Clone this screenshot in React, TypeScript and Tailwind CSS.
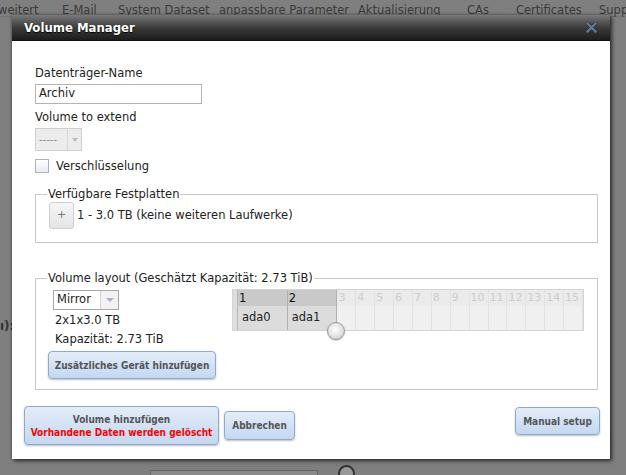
import React from 'react';

const tabs = [
  { label: 'weitert', x: -2 },
  { label: 'E-Mail', x: 62 },
  { label: 'System Dataset', x: 118 },
  { label: 'anpassbare Parameter', x: 219 },
  { label: 'Aktualisierung', x: 358 },
  { label: 'CAs', x: 467 },
  { label: 'Certificates', x: 516 },
  { label: 'Supp', x: 599 },
];

const slots = Array.from({ length: 13 }, (_, i) => i + 3);

const boldFont = "font-['DejaVu_Sans_Condensed','Liberation_Sans',sans-serif] font-bold";

function BlueButton({ children, className = '' }: { children: React.ReactNode; className?: string }) {
  return (
    <button
      className={`whitespace-nowrap rounded-[4px] border border-[#8fa9c9] bg-gradient-to-b from-[#e3edf9] to-[#c3d8f1] text-[10px] text-[#555] shadow-[0_1px_2px_rgba(0,0,0,0.25)] ${boldFont} ${className}`}
    >
      {children}
    </button>
  );
}

function Legend({ children }: { children: React.ReactNode }) {
  return <legend className="px-[1px] text-[11.5px] leading-[14px] text-[#222]">{children}</legend>;
}

export default function App() {
  return (
    <div className="relative h-[475px] w-[626px] overflow-hidden bg-[#7f7f7f] font-['DejaVu_Sans',sans-serif] text-[#222]">
      {/* page behind the overlay */}
      <div className="relative h-[17px] border-b border-[#727272]">
        {tabs.map(t => (
          <span
            key={t.label}
            className="absolute top-[2px] whitespace-nowrap text-[11.5px] leading-[16px] text-[#3a3a3a]"
            style={{ left: t.x }}
          >
            {t.label}
          </span>
        ))}
      </div>
      <div className="absolute left-0 top-[317px] text-[12px] font-bold text-[#333]">ı):</div>
      <div className="absolute left-[150px] top-[470px] h-[10px] w-[168px] border border-[#666] bg-[#8a8a8a]" />
      <div className="absolute left-[338px] top-[465px] h-[17px] w-[17px] rounded-full border-2 border-[#333] bg-[#999]" />

      {/* modal */}
      <div className="absolute left-[12px] top-[15px] flex h-[444px] w-[598px] flex-col shadow-[2px_2px_4px_rgba(0,0,0,0.6),0_0_3px_rgba(0,0,0,0.4)]">
        <div className="flex h-[26px] items-center justify-between border-b border-[#111] bg-gradient-to-b from-[#7a7a7a] via-[#3c3c3c] to-[#1c1c1c] pl-[12px] pr-[13px]">
          <span className={`text-[13px] text-white [text-shadow:0_1px_1px_#000] ${boldFont}`}>Volume Manager</span>
          <svg width="11" height="11" viewBox="0 0 11 11">
            <path d="M1.5 1.5 L9.5 9.5 M9.5 1.5 L1.5 9.5" stroke="#25303a" strokeWidth="3.6" strokeLinecap="square" />
            <path d="M1.5 1.5 L9.5 9.5 M9.5 1.5 L1.5 9.5" stroke="#687c8f" strokeWidth="2.2" strokeLinecap="square" />
          </svg>
        </div>

        <div className="flex flex-1 flex-col bg-white pl-[23px] pr-[12px]">
          <div className="mt-[24px] text-[11.5px] leading-[16px]">Datenträger-Name</div>
          <div className="mt-[3px] flex h-[20px] w-[167px] items-center border border-[#b4b4b4] px-[3px] text-[11.5px]">
            Archiv
          </div>
          <div className="mt-[5px] text-[11.5px] leading-[16px]">Volume to extend</div>
          <div className="mt-[3px] flex h-[23px] w-[47px] border border-[#cfcfcf] bg-[#ececec]">
            <div className="flex flex-1 items-center pl-[3px] text-[10px] text-[#888]">-----</div>
            <div className="flex w-[14px] items-center justify-center border-l border-[#d8d8d8]">
              <div className="h-0 w-0 border-x-[3px] border-t-[4px] border-x-transparent border-t-[#bbb]" />
            </div>
          </div>
          <div className="mt-[7px] flex items-center gap-[7px]">
            <div className="h-[14px] w-[14px] border border-[#a9b3c2] bg-gradient-to-b from-white to-[#e6ecf4]" />
            <span className="text-[11.5px] leading-[16px]">Verschlüsselung</span>
          </div>

          <fieldset className="mt-[13px] h-[56px] border border-[#c9c9c9] pl-[11px]">
            <Legend>Verfügbare Festplatten</Legend>
            <div className="mt-[1px] flex items-center gap-[3px] pl-[2px]">
              <div className="flex h-[27px] w-[25px] items-center justify-center rounded-[3px] border border-[#d0d0d0] bg-gradient-to-b from-[#f6f6f6] to-[#e4e4e4] text-[11px] text-[#777]">
                +
              </div>
              <span className="text-[11.5px]">1 - 3.0 TB (keine weiteren Laufwerke)</span>
            </div>
          </fieldset>

          <fieldset className="mt-[28px] h-[119px] border border-[#c9c9c9] pl-[11px]">
            <Legend>Volume layout (Geschätzt Kapazität: 2.73 TiB)</Legend>
            <div className="flex pl-[6px]">
              <div className="flex w-[179px] flex-col">
                <div className="mt-[5px] flex h-[20px] w-[66px] border border-[#a8a8a8] bg-white">
                  <div className="flex flex-1 items-center pl-[3px] text-[11.5px]">Mirror</div>
                  <div className="flex w-[18px] items-center justify-center border-l border-[#d6d6d6] bg-[#f2f2f2]">
                    <div className="h-0 w-0 border-x-[4px] border-t-[4px] border-x-transparent border-t-[#a6b2c6]" />
                  </div>
                </div>
                <div className="mt-[2px] pl-[2px] text-[11.5px] leading-[16px]">2x1x3.0 TB</div>
                <div className="mt-[3px] pl-[2px] text-[11.5px] leading-[16px]">Kapazität: 2.73 TiB</div>
                <BlueButton className="mt-[4px] -ml-[5px] h-[28px] w-[168px]">Zusätzliches Gerät hinzufügen</BlueButton>
              </div>

              <div className="relative mt-[4px] flex h-[42px] w-[352px] border border-[#d4d4d4] bg-[#efefef]">
                <div className="w-[5px] border-r border-[#b8b8b8] bg-[#dedede]" />
                {['ada0', 'ada1'].map((d, i) => (
                  <div key={d} className="flex w-[50px] flex-col border-r border-[#b0b0b0]">
                    <div className="h-[16px] bg-[#c9c9c9] pl-[1px] text-[11.5px] leading-[16px] text-[#111]">{i + 1}</div>
                    <div className="flex flex-1 items-center bg-[#dcdcdc] pl-[4px] text-[11.5px]">{d}</div>
                  </div>
                ))}
                {slots.map(n => (
                  <div key={n} className="flex w-[19px] flex-col border-r border-[#e2e2e2] last:border-r-0">
                    <div className="h-[16px] bg-[#ebebeb] pl-[1px] text-[11px] leading-[16px] text-[#cdcdcd]">{n}</div>
                    <div className="flex-1 bg-[#f0f0f0]" />
                  </div>
                ))}
                <div className="absolute left-[94px] top-[32px] h-[18px] w-[18px] rounded-full border border-[#9a9a9a] bg-[radial-gradient(circle_at_45%_40%,#ffffff,#e2e2e2_55%,#bdbdbd)] shadow-[0_1px_1px_rgba(0,0,0,0.2)]" />
              </div>
            </div>
          </fieldset>

          <div className="mt-[16px] flex items-start">
            <div className="flex items-center gap-[5px]">
              <BlueButton className="-ml-[11px] flex h-[39px] w-[195px] flex-col items-center justify-center leading-[13px]">
                <span>Volume hinzufügen</span>
                <span className="text-[#ff0000]">Vorhandene Daten werden gelöscht</span>
              </BlueButton>
              <BlueButton className="h-[29px] w-[71px]">Abbrechen</BlueButton>
            </div>
            <BlueButton className="ml-auto mt-[1px] -mr-[2px] h-[28px] w-[85px]">Manual setup</BlueButton>
          </div>
        </div>
      </div>
    </div>
  );
}
